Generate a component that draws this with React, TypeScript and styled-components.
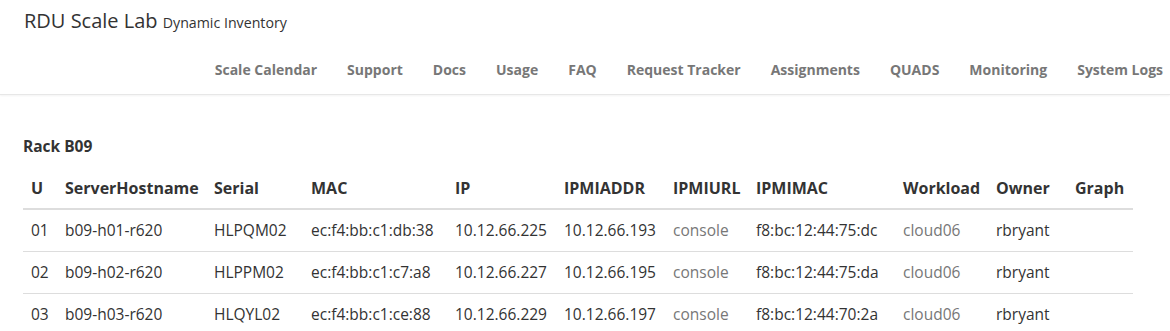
import React from "react";
import styled, { createGlobalStyle } from "styled-components";

const Global = createGlobalStyle`
  html, body { margin: 0; padding: 0; background: #fff; }
  body { font-family: "Open Sans", "Liberation Sans", sans-serif; color: #333; }
  * { box-sizing: border-box; }
`;

const Navbar = styled.header`
  height: 95px;
  border-bottom: 1px solid #e7e7e7;
  box-shadow: 0 1px 2px rgba(0,0,0,0.05);
  padding: 0 7px 0 24px;
  display: flex;
  flex-direction: column;
`;

const Brand = styled.div`
  padding-top: 8px;
  font-size: 20px;
  color: #333;
  line-height: 26px;
`;

const Sub = styled.span`
  font-size: 14.2px;
`;

const Nav = styled.nav`
  display: flex;
  justify-content: flex-end;
  gap: 30px;
  margin-top: 24px;
`;

const NavLink = styled.a`
  font-size: 14px;
  font-weight: 700;
  color: #777;
  text-decoration: none;
`;

const Main = styled.main`
  padding: 40px 37px 0 23px;
`;

const Title = styled.h4`
  margin: 0 0 12px 0;
  font-size: 15.5px;
  font-weight: 700;
  line-height: 22px;
`;

const Table = styled.table`
  border-collapse: collapse;
  table-layout: fixed;
  width: 1110px;
  font-size: 15.5px;
`;

const Th = styled.th<{ $w: number }>`
  width: ${(p) => p.$w}px;
  text-align: left;
  font-size: 16px;
  font-weight: 700;
  padding: 8px 8px 9px;
  border-bottom: 2px solid #ddd;
  white-space: nowrap;
  line-height: 22px;
`;

const Td = styled.td`
  padding: 9px 8px 10px;
  border-top: 1px solid #ddd;
  white-space: nowrap;
  line-height: 22px;
`;

const Row = styled.tr`
  &:first-child td { border-top: none; }
`;

const Link = styled.a`
  color: #777;
  text-decoration: none;
`;

const cols: [string, number][] = [
  ["U", 34], ["ServerHostname", 149], ["Serial", 97], ["MAC", 144], ["IP", 109],
  ["IPMIADDR", 109], ["IPMIURL", 83], ["IPMIMAC", 147], ["Workload", 93], ["Owner", 79], ["Graph", 66],
];

const rows = [
  ["01", "b09-h01-r620", "HLPQM02", "ec:f4:bb:c1:db:38", "10.12.66.225", "10.12.66.193", "f8:bc:12:44:75:dc"],
  ["02", "b09-h02-r620", "HLPPM02", "ec:f4:bb:c1:c7:a8", "10.12.66.227", "10.12.66.195", "f8:bc:12:44:75:da"],
  ["03", "b09-h03-r620", "HLQYL02", "ec:f4:bb:c1:ce:88", "10.12.66.229", "10.12.66.197", "f8:bc:12:44:70:2a"],
];

const navItems = ["Scale Calendar", "Support", "Docs", "Usage", "FAQ", "Request Tracker", "Assignments", "QUADS", "Monitoring", "System Logs"];

export default function App() {
  return (
    <>
      <Global />
      <Navbar>
        <Brand>RDU Scale Lab <Sub>Dynamic Inventory</Sub></Brand>
        <Nav>
          {navItems.map((n) => <NavLink key={n} href="#">{n}</NavLink>)}
        </Nav>
      </Navbar>
      <Main>
        <Title>Rack B09</Title>
        <Table>
          <thead>
            <tr>{cols.map(([c, w]) => <Th key={c} $w={w}>{c}</Th>)}</tr>
          </thead>
          <tbody>
            {rows.map((r) => (
              <Row key={r[0]}>
                <Td>{r[0]}</Td>
                <Td>{r[1]}</Td>
                <Td>{r[2]}</Td>
                <Td>{r[3]}</Td>
                <Td>{r[4]}</Td>
                <Td>{r[5]}</Td>
                <Td><Link href="#">console</Link></Td>
                <Td>{r[6]}</Td>
                <Td><Link href="#">cloud06</Link></Td>
                <Td>rbryant</Td>
                <Td></Td>
              </Row>
            ))}
          </tbody>
        </Table>
      </Main>
    </>
  );
}
